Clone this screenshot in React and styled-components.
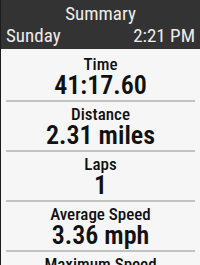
import styled, { createGlobalStyle } from "styled-components";

const Global = createGlobalStyle`
    html, body {
        margin: 0;
        padding: 0;
        overflow: hidden;
        background: #f6f6f6;
    }
    * {
        box-sizing: border-box;
    }
`;

const stats = [
    { label: "Time", value: "41:17.60" },
    { label: "Distance", value: "2.31 miles" },
    { label: "Laps", value: "1" },
    { label: "Average Speed", value: "3.36 mph" },
    { label: "Maximum Speed", value: "4.12 mph" },
];

export default function App(){
    return(
        <Screen>
            <Global />
            <Header>
                <Title>Summary</Title>
                <SubBar>
                    <span>Sunday</span>
                    <span>2:21 PM</span>
                </SubBar>
            </Header>

            <List>
                {stats.map((s) => (
                    <Row key={s.label}>
                        <Cell>
                            <Label>{s.label}</Label>
                            <Value>{s.value}</Value>
                        </Cell>
                    </Row>
                ))}
            </List>
        </Screen>
    );
}

const Screen = styled.div`
    width: 200px;
    height: 265px;
    overflow: hidden;
    display: flex;
    flex-direction: column;
    background: #f6f6f6;
    border-left: 1px solid #1c1c1c;
    font-family: Roboto, "Liberation Sans", sans-serif;
`;

const Header = styled.div`
    height: 49px;
    flex-shrink: 0;
    padding: 3px 5px 2px 5px;
    background: #333333;
    color: #ececec;
    font-size: 19px;
    line-height: 22px;
    font-stretch: 78%;
`;

const Title = styled.div`
    text-align: center;
`;

const SubBar = styled.div`
    display: flex;
    justify-content: space-between;
`;

const List = styled.div`
    padding-top: 3px;
    display: flex;
    flex-direction: column;
`;

const Row = styled.div`
    padding: 0 5px;
    flex-shrink: 0;
`;

const Cell = styled.div`
    height: 50px;
    padding-top: 3px;
    border-bottom: 2px solid #c2c2c2;
    text-align: center;
    color: #111111;
`;

const Label = styled.div`
    font-size: 17px;
    line-height: 18px;
    font-weight: 500;
    font-stretch: 80%;
`;

const Value = styled.div`
    font-size: 26px;
    line-height: 24px;
    font-weight: 600;
    font-stretch: 78%;
`;
